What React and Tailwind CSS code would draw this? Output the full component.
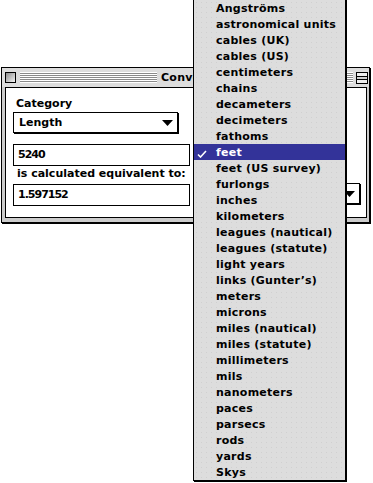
import React from "react";

const units = [
  "Angströms",
  "astronomical units",
  "cables (UK)",
  "cables (US)",
  "centimeters",
  "chains",
  "decameters",
  "decimeters",
  "fathoms",
  "feet",
  "feet (US survey)",
  "furlongs",
  "inches",
  "kilometers",
  "leagues (nautical)",
  "leagues (statute)",
  "light years",
  "links (Gunter’s)",
  "meters",
  "microns",
  "miles (nautical)",
  "miles (statute)",
  "millimeters",
  "mils",
  "nanometers",
  "paces",
  "parsecs",
  "rods",
  "yards",
  "Skys",
];

function Triangle() {
  return (
    <svg width="11" height="6" viewBox="0 0 11 6" className="block shrink-0">
      <path d="M0 0H11L5.5 6Z" fill="#000" />
    </svg>
  );
}

function Popup({ label, className }) {
  return (
    <div
      className={`h-[21px] border border-black bg-white shadow-[1px_1px_0_#000] flex items-center justify-between pl-[5px] pr-[4px] ${className}`}
    >
      <span className="leading-none">{label}</span>
      <Triangle />
    </div>
  );
}

function Field({ value }) {
  return (
    <div className="h-[22px] w-[177px] border border-black bg-white flex items-center pl-[4px] tracking-[-1px]">
      {value}
    </div>
  );
}

function Stripes({ className }) {
  return (
    <div
      className={`h-[11px] bg-[repeating-linear-gradient(to_bottom,#ffffff_0px,#ffffff_1px,#8a8a8a_1px,#8a8a8a_2px)] ${className}`}
    />
  );
}

export default function App() {
  return (
    <div className="relative w-[373px] h-[483px] bg-white overflow-hidden font-['DejaVu_Sans',sans-serif] font-bold text-[11px] text-black">
      {/* Window */}
      <div className="absolute left-[1px] top-[67px] w-[369px] h-[156px] border border-black bg-[#cccccc] shadow-[1px_1px_0_#000] flex flex-col">
        {/* Title bar */}
        <div className="h-[19px] shrink-0 flex items-center pl-[3px] pr-[1px] bg-[#dddddd]">
          <div className="w-[11px] h-[11px] border border-black bg-[linear-gradient(135deg,#8c8c8c,#f4f4f4)] shrink-0" />
          <Stripes className="ml-[4px] w-[137px]" />
          <div className="px-[4px] text-[11px] leading-none whitespace-nowrap tracking-[0.25px]">Converter</div>
          <Stripes className="flex-1" />
          <div className="ml-[3px] w-[12px] h-[12px] border border-black bg-[#eeeeee] flex flex-col justify-center shrink-0">
            <div className="h-[4px] border-y border-black bg-[#cfcfcf]" />
          </div>
        </div>
        {/* Content */}
        <div className="ml-[3px] mr-[2px] mb-[4px] flex-1 border border-black bg-white flex pl-[7px] pt-[8px]">
          <div className="flex flex-col w-[177px]">
            <div className="h-[15px] leading-[15px] pl-[3px]">Category</div>
            <Popup label="Length" className="mt-[1px] w-[165px]" />
            <div className="mt-[11px]">
              <Field value="5240" />
            </div>
            <div className="h-[18px] leading-[16px] pl-[4px] whitespace-nowrap">is calculated equivalent to:</div>
            <Field value="1.597152" />
          </div>
          <div className="ml-[10px] pt-[87px]">
            <Popup label="" className="w-[160px]" />
          </div>
        </div>
      </div>

      {/* Pop-up menu */}
      <div className="absolute left-[193px] top-[-1px] w-[153px] border border-black shadow-[1px_1px_0_#000] bg-[#dddddd] bg-[radial-gradient(circle,#d0d0d0_0.6px,transparent_0.8px)] bg-[length:5px_5px] tracking-[0.25px]">
        {units.map((u) => {
          const sel = u === "feet";
          return (
            <div
              key={u}
              className={`h-[16px] flex items-center relative pl-[22px] whitespace-nowrap leading-none ${
                sel ? "bg-[#333399] text-white" : ""
              }`}
            >
              {sel && (
                <svg
                  width="10"
                  height="8"
                  viewBox="0 0 10 8"
                  className="absolute left-[3px] top-[6px]"
                >
                  <path d="M1 4.5L3.5 7L9 1" stroke="#fff" strokeWidth="1.6" fill="none" />
                </svg>
              )}
              {u}
            </div>
          );
        })}
      </div>
    </div>
  );
}
